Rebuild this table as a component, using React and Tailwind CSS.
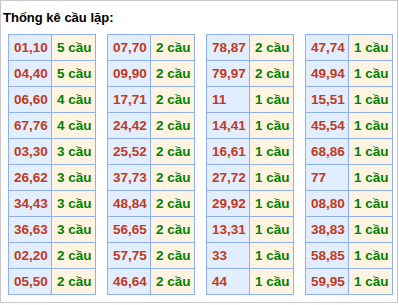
import React from 'react';

const tables = [
  [
    ['01,10', 5], ['04,40', 5], ['06,60', 4], ['67,76', 4], ['03,30', 3],
    ['26,62', 3], ['34,43', 3], ['36,63', 3], ['02,20', 2], ['05,50', 2],
  ],
  [
    ['07,70', 2], ['09,90', 2], ['17,71', 2], ['24,42', 2], ['25,52', 2],
    ['37,73', 2], ['48,84', 2], ['56,65', 2], ['57,75', 2], ['46,64', 2],
  ],
  [
    ['78,87', 2], ['79,97', 2], ['11', 1], ['14,41', 1], ['16,61', 1],
    ['27,72', 1], ['29,92', 1], ['13,31', 1], ['33', 1], ['44', 1],
  ],
  [
    ['47,74', 1], ['49,94', 1], ['15,51', 1], ['45,54', 1], ['68,86', 1],
    ['77', 1], ['08,80', 1], ['38,83', 1], ['58,85', 1], ['59,95', 1],
  ],
];

const CauTable = ({ rows }) => (
  <div className="w-[88px] border-l border-t border-[#8eb0ee]">
    {rows.map(([pair, count]) => (
      <div key={pair} className="flex h-[26px]">
        <div className="w-[43px] border-r border-b border-[#8eb0ee] bg-[#e2edfd] pl-[5px] leading-[25px] text-[13.5px] font-bold text-[#bf3a22]">
          {pair}
        </div>
        <div className="w-[44px] border-r border-b border-[#8eb0ee] bg-[#fff3e1] pl-[5px] leading-[25px] text-[13.5px] font-bold text-[#008000]">
          {count} cầu
        </div>
      </div>
    ))}
  </div>
);

export default function App() {
  return (
    <div
      className="w-[398px] h-[303px] border border-[#c8c8c8] bg-white"
      style={{ fontFamily: '"Liberation Sans", Arial, sans-serif' }}
    >
      <div className="pl-[2px] pt-[9px] h-[33px] text-[13px] font-bold leading-[16px] text-black">
        Thống kê cầu lặp:
      </div>
      <div className="flex gap-[11px] pl-[7px]">
        {tables.map((rows, i) => (
          <CauTable key={i} rows={rows} />
        ))}
      </div>
    </div>
  );
}
